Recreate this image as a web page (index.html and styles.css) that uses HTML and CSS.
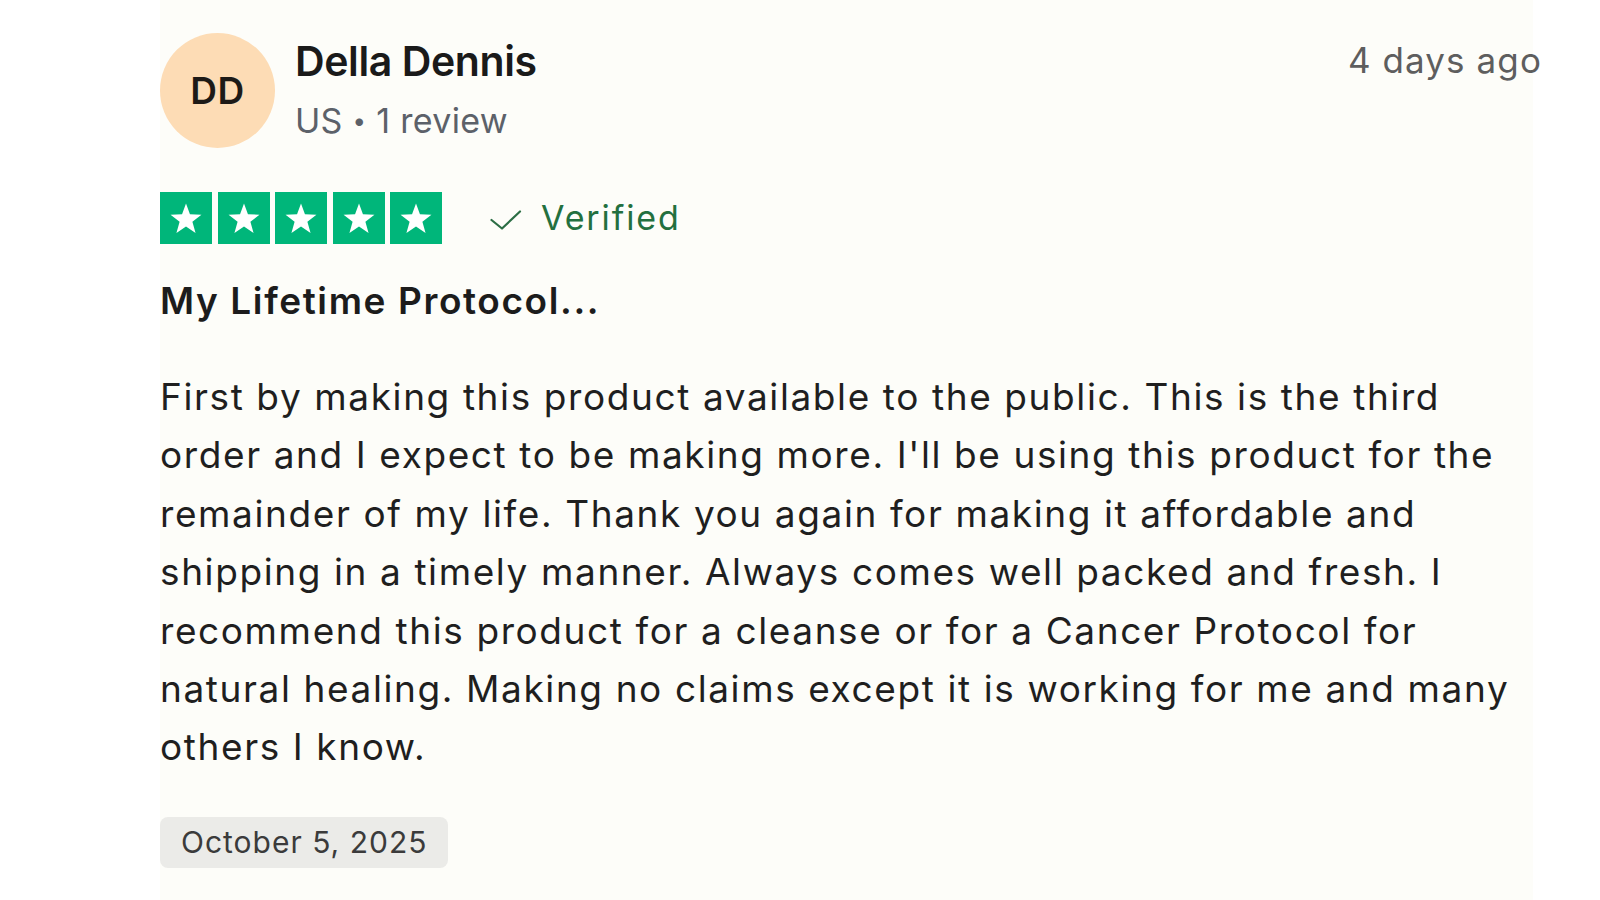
FILE: index.html
```html
<!DOCTYPE html>
<html lang="en">
<head>
<meta charset="utf-8">
<title>Review</title>
<link rel="stylesheet" href="styles.css">
</head>
<body>
<article class="review">
  <header class="review-head">
    <div class="avatar">DD</div>
    <div class="who">
      <div class="name">Della Dennis</div>
      <div class="meta">US <span class="dot">•</span> 1 review</div>
    </div>
    <time class="ago">4 days ago</time>
  </header>

  <div class="rating-row">
    <div class="stars" aria-label="Rated 5 out of 5">
      <span class="star"><svg viewBox="0 0 24 24"><polygon points="12,5.3 13.82,10.29 19.13,10.48 14.95,13.76 16.41,18.87 12,15.9 7.59,18.87 9.05,13.76 4.87,10.48 10.18,10.29"/></svg></span>
      <span class="star"><svg viewBox="0 0 24 24"><polygon points="12,5.3 13.82,10.29 19.13,10.48 14.95,13.76 16.41,18.87 12,15.9 7.59,18.87 9.05,13.76 4.87,10.48 10.18,10.29"/></svg></span>
      <span class="star"><svg viewBox="0 0 24 24"><polygon points="12,5.3 13.82,10.29 19.13,10.48 14.95,13.76 16.41,18.87 12,15.9 7.59,18.87 9.05,13.76 4.87,10.48 10.18,10.29"/></svg></span>
      <span class="star"><svg viewBox="0 0 24 24"><polygon points="12,5.3 13.82,10.29 19.13,10.48 14.95,13.76 16.41,18.87 12,15.9 7.59,18.87 9.05,13.76 4.87,10.48 10.18,10.29"/></svg></span>
      <span class="star"><svg viewBox="0 0 24 24"><polygon points="12,5.3 13.82,10.29 19.13,10.48 14.95,13.76 16.41,18.87 12,15.9 7.59,18.87 9.05,13.76 4.87,10.48 10.18,10.29"/></svg></span>
    </div>
    <div class="verified">
      <svg class="check" viewBox="0 0 32 20"><polyline points="1.5,10 12,18.5 30,1.5"/></svg>
      <span>Verified</span>
    </div>
  </div>

  <h2 class="title">My Lifetime Protocol...</h2>

  <p class="body">First by making this product available to the public. This is the third order and I expect to be making more. I'll be using this product for the remainder of my life. Thank you again for making it affordable and shipping in a timely manner. Always comes well packed and fresh. I recommend this product for a cleanse or for a Cancer Protocol for natural healing. Making no claims except it is working for me and many others I know.</p>

  <div class="date-pill">October 5, 2025</div>
</article>
</body>
</html>
```

FILE: styles.css
```css
* { box-sizing: border-box; }

html, body {
  margin: 0;
  padding: 0;
  background: #ffffff;
}

body {
  font-family: Inter, "Noto Sans", "Liberation Sans", sans-serif;
  color: #1c1c1c;
}

.review {
  margin-left: 160px;
  width: 1373px;
  min-height: 900px;
  background: #fdfdf9;
  padding-top: 33px;
}

.review-head {
  display: flex;
  align-items: flex-start;
  margin-right: -9px;
}

.avatar {
  width: 115px;
  height: 115px;
  border-radius: 50%;
  background: #fddcb5;
  color: #1d1a17;
  font-size: 37px;
  font-weight: 600;
  display: flex;
  align-items: center;
  justify-content: center;
  letter-spacing: 0.5px;
  flex: none;
}

.who {
  margin-left: 20px;
  margin-top: 4px;
  display: flex;
  flex-direction: column;
  gap: 14px;
}

.name {
  font-size: 41px;
  line-height: 49px;
  font-weight: 600;
  color: #1a1a1a;
  letter-spacing: -0.4px;
}

.meta {
  font-size: 34px;
  line-height: 41px;
  color: #5c6169;
  letter-spacing: 0.3px;
}

.meta .dot {
  font-size: 24px;
  vertical-align: 4px;
}

.ago {
  margin-left: auto;
  margin-top: 6px;
  font-size: 35px;
  line-height: 42px;
  color: #5e5e5e;
  letter-spacing: 1.1px;
}

.rating-row {
  display: flex;
  align-items: center;
  margin-top: 44px;
}

.stars {
  display: flex;
  gap: 5.5px;
}

.star {
  width: 52px;
  height: 52px;
  background: #00b67a;
  display: flex;
}

.star svg {
  width: 52px;
  height: 52px;
  fill: #ffffff;
}

.verified {
  display: flex;
  align-items: center;
  margin-left: 48px;
  color: #23703f;
  font-size: 34px;
  line-height: 40px;
  letter-spacing: 1.9px;
}

.check {
  width: 32px;
  height: 20px;
  margin-right: 19px;
  margin-top: 4px;
  fill: none;
  stroke: #2c6e45;
  stroke-width: 2.2;
  stroke-linecap: round;
  stroke-linejoin: round;
}

.title {
  margin: 33px 0 0;
  font-size: 37px;
  line-height: 47px;
  font-weight: 600;
  color: #1c1c1c;
  letter-spacing: 1.6px;
}

.body {
  margin: 44px 0 0;
  padding-right: 8px;
  font-size: 37px;
  line-height: 58.4px;
  color: #1f1f1f;
  letter-spacing: 1.6px;
}

.date-pill {
  display: inline-flex;
  align-items: center;
  height: 51px;
  margin-top: 40px;
  padding: 0 21px;
  background: #ebebe8;
  border-radius: 8px;
  font-size: 30px;
  color: #3b3b3b;
  letter-spacing: 1px;
}
```
